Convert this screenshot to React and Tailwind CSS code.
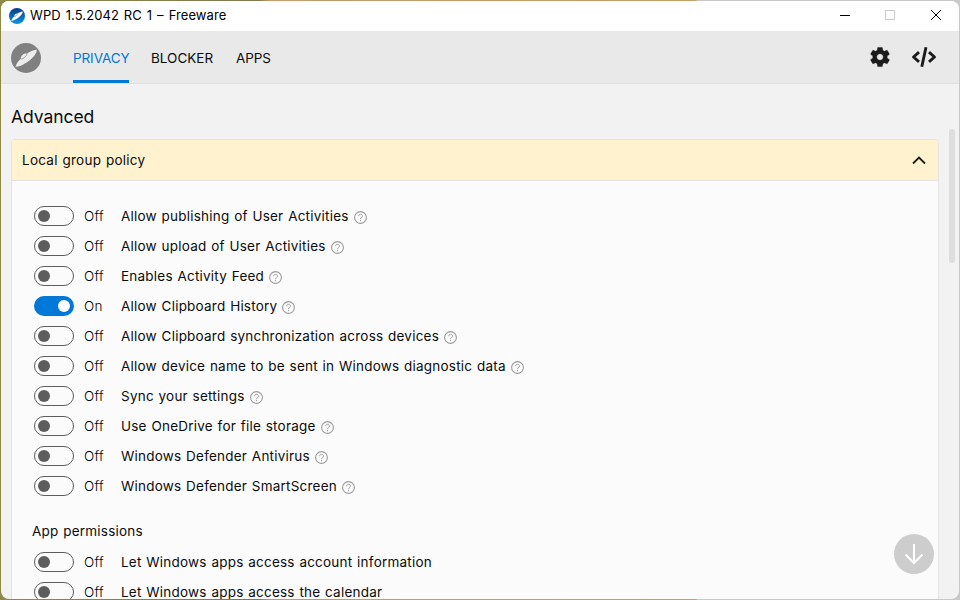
import React from "react";

const policies = [
  ["Allow publishing of User Activities", false],
  ["Allow upload of User Activities", false],
  ["Enables Activity Feed", false],
  ["Allow Clipboard History", true],
  ["Allow Clipboard synchronization across devices", false],
  ["Allow device name to be sent in Windows diagnostic data", false],
  ["Sync your settings", false],
  ["Use OneDrive for file storage", false],
  ["Windows Defender Antivirus", false],
  ["Windows Defender SmartScreen", false],
];
const permissions = [
  ["Let Windows apps access account information", false],
  ["Let Windows apps access the calendar", false],
];

function Logo({ size, blue }) {
  return (
    <svg width={size} height={size} viewBox="0 0 30 30" className="shrink-0">
      <defs>
        <linearGradient id="sky" x1="0" y1="0" x2="0" y2="1">
          <stop offset="0" stopColor="#083c83" />
          <stop offset="1" stopColor="#0a96e8" />
        </linearGradient>
      </defs>
      <circle cx="15" cy="15" r="15" fill={blue ? "url(#sky)" : "#808080"} />
      <path d="M4.500 23.800C5.500 20.500 7.500 17.800 9.700 15.800C10 12.300 12.500 10.200 16 10.500C19.500 8.200 23 6.900 26 6.700C25.500 10.500 22.500 14.300 19 17C17 18.600 15 20 13 21C10 22.800 7 24 4.500 23.800Z" fill={blue ? "#fff" : "#ececec"} />
      <path d="M9.700 15.800C11 16.800 15.800 13.500 16 10.500" fill="none" stroke={blue ? "#0b5aa5" : "#8c8c8c"} strokeWidth="0.9" />
    </svg>
  );
}

function Help() {
  return (
    <svg width="13" height="13" viewBox="0 0 13 13" fill="none" stroke="#9c9c9c" className="ml-[5px] mt-[3px] shrink-0">
      <circle cx="6.500" cy="6.500" r="5.900" strokeWidth="1.100" />
      <path d="M4.600 5.200C4.600 2.700 8.500 2.800 8.500 5.100C8.500 6.500 6.500 6.500 6.500 8.200M6.500 9.100V10.200" />
    </svg>
  );
}

function Row({ label, on, help }) {
  return (
    <div className="flex h-[30px] items-center">
      <div className={on ? "flex h-5 w-10 items-center justify-end rounded-full bg-[#0078d7] pr-1" : "flex h-5 w-10 items-center rounded-full border border-[#5d5d5d] pl-[3px]"}>
        <div className={on ? "size-3 rounded-full bg-white" : "size-3 rounded-full bg-[#5d5d5d]"} />
      </div>
      <span className="ml-[10px] w-[37px] font-light tracking-[0.3px] text-black">{on ? "On" : "Off"}</span>
      <span className="whitespace-nowrap tracking-[0.22px] [word-spacing:0.700px]">{label}</span>
      {help && <Help />}
    </div>
  );
}

export default function App() {
  return (
    <div className="h-[600px] w-[960px] overflow-hidden bg-[linear-gradient(90deg,#8f8948,#7f7a50_27%,#c49b6d_28%,#c4a062_72.5%,#c8c8c8_72.6%)] p-px font-['Inter','Liberation_Sans',sans-serif] text-[13.500px] text-[#0c0c0c]">
      <div className="relative flex h-[598px] w-[958px] flex-col overflow-hidden rounded-lg bg-[#f2f2f2]">
        <header className="flex h-[30px] shrink-0 items-center bg-white pl-2 text-[13px] text-black">
          <Logo size={16} blue />
          <span className="ml-[5px] tracking-[0.080px] [word-spacing:1.200px]">WPD 1.5.2042 RC 1 – Freeware</span>
          <svg width="120" height="30" className="ml-auto" fill="none">
            <path d="M1 14.500H11" stroke="#000" />
            <rect x="46.500" y="9.500" width="9" height="9" stroke="#ccc" />
            <path d="M92 9L102 19M102 9L92 19" stroke="#000" />
          </svg>
        </header>
        <nav className="flex h-[53px] shrink-0 border-b border-[#e0e0e0] bg-[#e9e9e9] pl-[10px]">
          <div className="flex items-center pt-[2px]"><Logo size={30} /></div>
          <div className="ml-8 flex h-[52px] gap-[22px] leading-[54px] tracking-[-0.100px]">
            <span className="w-14 border-b-[3px] border-[#0078d7] text-[#0078d7]">PRIVACY</span>
            <span className="w-[63px] tracking-normal">BLOCKER</span>
            <span>APPS</span>
          </div>
          <div className="ml-auto flex gap-[19px] pr-[22px] pt-[14px]">
            <svg width="24" height="24" viewBox="0 0 24 24" fill="#1b1b1b" stroke="#1b1b1b" strokeWidth="0.400"><path d="M19.140 12.940c.04-.3.060-.61.060-.94s-.02-.64-.07-.94l2.030-1.580c.18-.14.230-.41.120-.61l-1.920-3.320c-.12-.22-.37-.29-.59-.22l-2.390.96c-.5-.38-1.030-.7-1.620-.94L14.400 2.810c-.04-.24-.24-.41-.48-.41h-3.840c-.24 0-.43.170-.47.410L9.250 5.350c-.59.240-1.130.570-1.620.94l-2.390-.96c-.22-.08-.47 0-.59.220L2.740 8.870c-.12.210-.08.470.12.610l2.030 1.580c-.05.300-.09.630-.09.940s.02.640.07.940l-2.030 1.580c-.18.140-.23.410-.12.610l1.920 3.320c.12.220.37.290.59.220l2.390-.96c.5.380 1.030.700 1.620.94l.36 2.540c.05.240.24.410.48.410h3.840c.24 0 .44-.17.470-.41l.36-2.540c.59-.24 1.130-.56 1.620-.94l2.390.96c.22.080.47 0 .59-.22l1.920-3.320c.12-.22.070-.47-.12-.61zM12 15.300c-1.820 0-3.300-1.480-3.300-3.300s1.480-3.300 3.300-3.300 3.300 1.480 3.300 3.300-1.480 3.300-3.300 3.300z" /></svg>
            <svg width="26" height="24" viewBox="0 0 26 24" fill="none" stroke="#1b1b1b" strokeWidth="2.900" strokeLinejoin="round"><path d="M8 7.200L2.500 12L8 16.800M18 7.200L23.500 12L18 16.800M15 2.200L10.800 21.800" /></svg>
          </div>
        </nav>
        <main className="flex min-h-0 flex-1">
          <div className="ml-[10px] w-[928px]">
            <h1 className="flex h-[55px] items-center pt-3 text-[17.500px] tracking-[-0.060px]">Advanced</h1>
            <section className="h-[470px] rounded-t border border-[#e3e3e3] bg-[#fbfbfb]">
              <div className="flex h-[41px] items-center justify-between rounded-t-[3px] border-b border-[#e3e3e3] bg-[#fff2ce] pl-[10px] pr-3">
                <span className="tracking-[0.250px] [word-spacing:0.700px]">Local group policy</span>
                <svg width="14" height="9" viewBox="0 0 14 9" fill="none" stroke="#1b1b1b" strokeWidth="1.800"><path d="M1 7.500L7 1.500L13 7.500" /></svg>
              </div>
              <div className="pl-[22px] pt-5">
                {policies.map(([l, on]) => <Row key={l} label={l} on={on} help />)}
                <div className="-ml-[2px] flex h-[46px] items-center pt-[14px] tracking-[0.220px] [word-spacing:0.700px]">App permissions</div>
                {permissions.map(([l, on]) => <Row key={l} label={l} on={on} />)}
              </div>
            </section>
          </div>
          <div className="ml-[10px] mt-[45px] h-[134px] w-[6px] rounded-full bg-[#dedede]" />
        </main>
        <button className="absolute left-[893px] top-[533px] flex size-10 items-center justify-center rounded-full bg-[#cdcdcd]">
          <svg width="20" height="22" viewBox="0 0 20 22" fill="none" stroke="#fff" strokeWidth="2"><path d="M10 1V20M1.500 11.500L10 20L18.500 11.500" /></svg>
        </button>
      </div>
    </div>
  );
}
